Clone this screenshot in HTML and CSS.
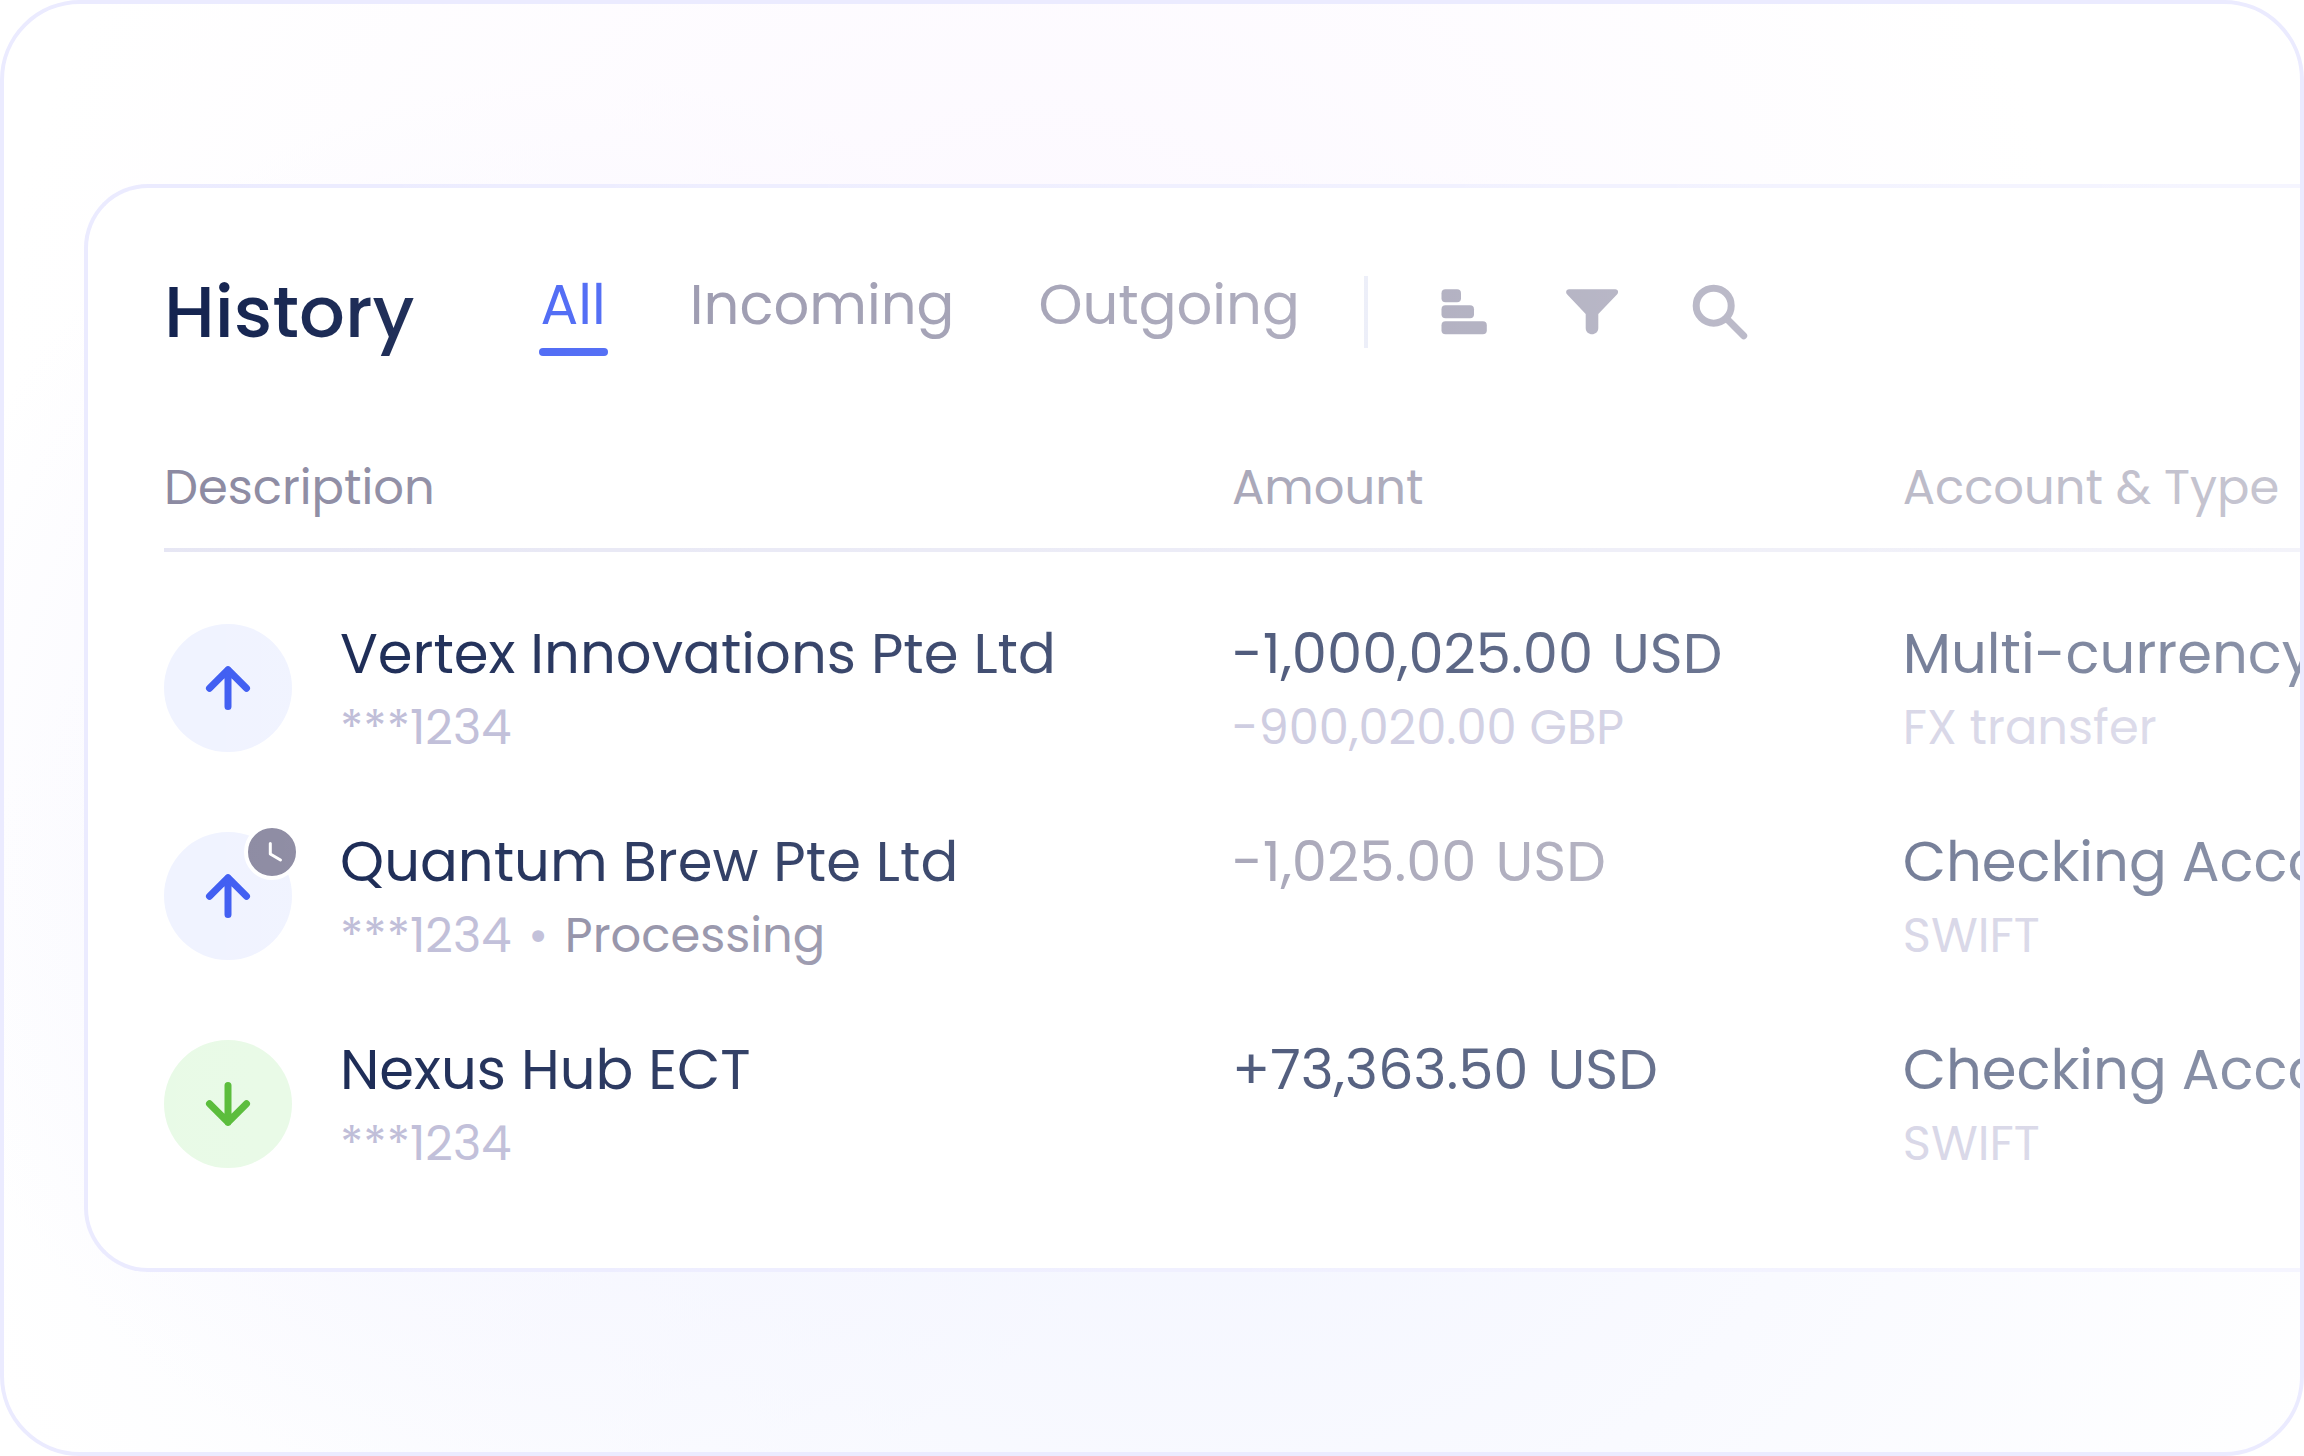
FILE: index.html
```html
<!DOCTYPE html>
<html lang="en">
<head>
    <meta charset="utf-8">
    <title>History</title>
    <link rel="stylesheet" href="styles.css">
</head>
<body>
    <main class="frame">
        <section class="card">
            <header class="card-header">
                <h1>History</h1>
                <nav class="tabs">
                    <button type="button" class="tab active">All</button>
                    <button type="button" class="tab">Incoming</button>
                    <button type="button" class="tab">Outgoing</button>
                </nav>
                <div class="tools">
                    <button type="button" class="tool" aria-label="Sort">
                        <svg viewBox="0 0 64 64"><rect x="9.5" y="9.3" width="19.5" height="13" rx="4"/><rect x="9.5" y="25.3" width="32.5" height="13" rx="4"/><rect x="9.5" y="41.3" width="45.3" height="13" rx="4"/></svg>
                    </button>
                    <button type="button" class="tool" aria-label="Filter">
                        <svg viewBox="0 0 64 64"><path d="M9 9.3H55.300C58 9.300 59 12.300 57.200 14.200L38.300 34V48C38.300 56.300 25.700 56.300 25.700 48V34L7 14.200C5.300 12.300 6.300 9.300 9 9.300Z"/></svg>
                    </button>
                    <button type="button" class="tool" aria-label="Search">
                        <svg viewBox="0 0 64 64"><g fill="none" stroke-width="7" stroke-linecap="round"><circle cx="25.700" cy="25.700" r="17.500"/><path d="M39 39L55.700 55.700"/></g></svg>
                    </button>
                </div>
            </header>

            <table>
                <thead>
                    <tr>
                        <th class="col-description">Description</th>
                        <th class="col-amount">Amount</th>
                        <th>Account &amp; Type</th>
                    </tr>
                </thead>
                <tbody>
                    <tr>
                        <td>
                            <div class="entry">
                                <span class="avatar outgoing">
                                    <svg viewBox="0 0 128 128"><path d="M64 82.500V45.700M45.500 64.200L64 45.700L82.500 64.200"/></svg>
                                </span>
                                <div>
                                    <div class="main">Vertex Innovations Pte Ltd</div>
                                    <div class="sub">***1234</div>
                                </div>
                            </div>
                        </td>
                        <td>
                            <div class="main">-1,000,025.00 <span class="currency">USD</span></div>
                            <div class="sub">-900,020.00 GBP</div>
                        </td>
                        <td>
                            <div class="main">Multi-currency</div>
                            <div class="sub">FX transfer</div>
                        </td>
                    </tr>
                    <tr>
                        <td>
                            <div class="entry">
                                <span class="avatar outgoing">
                                    <svg viewBox="0 0 128 128"><path d="M64 82.500V45.700M45.500 64.200L64 45.700L82.500 64.200"/></svg>
                                    <span class="badge">
                                        <svg viewBox="0 0 48 48"><path d="M22.300 15.500V26L32.500 32"/></svg>
                                    </span>
                                </span>
                                <div>
                                    <div class="main">Quantum Brew Pte Ltd</div>
                                    <div class="sub">***1234 <span class="dot">•</span> <span class="status">Processing</span></div>
                                </div>
                            </div>
                        </td>
                        <td>
                            <div class="main pending">-1,025.00 <span class="currency">USD</span></div>
                        </td>
                        <td>
                            <div class="main">Checking Account</div>
                            <div class="sub">SWIFT</div>
                        </td>
                    </tr>
                    <tr>
                        <td>
                            <div class="entry">
                                <span class="avatar incoming">
                                    <svg viewBox="0 0 128 128"><path d="M64 45.500V82.300M45.500 63.800L64 82.300L82.500 63.800"/></svg>
                                </span>
                                <div>
                                    <div class="main">Nexus Hub ECT</div>
                                    <div class="sub">***1234</div>
                                </div>
                            </div>
                        </td>
                        <td>
                            <div class="main">+73,363.50 <span class="currency">USD</span></div>
                        </td>
                        <td>
                            <div class="main">Checking Account</div>
                            <div class="sub">SWIFT</div>
                        </td>
                    </tr>
                </tbody>
            </table>
        </section>
    </main>
</body>
</html>
```
FILE: styles.css
```css
* {
    box-sizing: border-box;
}

body {
    margin: 0;
    background: #fff;
    color: #0f1f4c;
    font-family: Poppins, Inter, sans-serif;
}

.frame {
    min-height: 100vh;
    padding: 180px 0 180px 80px;
    border: 4px solid #ebebff;
    border-radius: 80px;
    overflow: hidden;
    background:
        radial-gradient(ellipse 45% 55% at 45% 22%, #fcf8ff, rgba(252, 248, 255, 0)),
        radial-gradient(ellipse 55% 65% at 52% 75%, #f3f5ff, rgba(243, 245, 255, 0)),
        radial-gradient(ellipse 30% 50% at 25% 55%, #f3f2ff, rgba(243, 242, 255, 0)),
        #fff;
}

/* the card runs off the right side and fades on the way */
.card {
    position: relative;
    padding: 76px 0 60px 76px;
    border: 4px solid #ebebff;
    border-right: 0;
    border-radius: 64px 0 0 64px;
    background: #fff;
}

.card::after {
    content: "";
    position: absolute;
    inset: -4px 0 -4px -4px;
    border-radius: 64px 0 0 64px;
    background: linear-gradient(to right, rgba(255, 255, 255, 0), rgba(255, 255, 255, 0.52));
    pointer-events: none;
}

.card-header {
    display: flex;
    align-items: center;
    height: 96px;
    margin-bottom: 92px;
}

h1 {
    margin: 0 124px 0 0;
    font-size: 72px;
    font-weight: 500;
    line-height: 96px;
}

button {
    padding: 0;
    border: 0;
    background: none;
    font-family: inherit;
    cursor: pointer;
}

.tabs {
    display: flex;
    gap: 80px;
}

.tab {
    position: relative;
    height: 96px;
    padding: 0 2px 14px;
    font-size: 56px;
    line-height: 82px;
    color: #8f8da5;
}

.tab.active {
    color: #3e5cf4;
}

.tab.active::after {
    content: "";
    position: absolute;
    left: 0;
    right: 0;
    bottom: 4px;
    height: 8px;
    border-radius: 4px;
    background: #3e5cf4;
}

.tools {
    display: flex;
    align-items: center;
    gap: 64px;
    height: 72px;
    margin-left: 62px;
    padding-left: 64px;
    border-left: 4px solid #e5e8f6;
}

.tool {
    width: 64px;
    height: 64px;
}

svg {
    display: block;
    width: 100%;
    height: 100%;
}

.tool svg {
    fill: #908ea6;
}

.tool g {
    stroke: #908ea6;
}

table {
    width: 100%;
    table-layout: fixed;
    border-collapse: separate;
    border-spacing: 0;
    white-space: nowrap;
}

th {
    padding: 0 0 24px;
    border-bottom: 4px solid #e6e6f4;
    text-align: left;
    font-size: 48px;
    font-weight: 400;
    line-height: 72px;
    color: #8a88a0;
}

.col-description {
    width: 50%;
}

.col-amount {
    width: 31.4%;
}

td {
    padding: 32px 0 28px;
    vertical-align: top;
}

tbody tr:first-child td {
    padding-top: 64px;
}

.entry {
    display: flex;
    align-items: flex-start;
    gap: 48px;
}

.main {
    font-size: 56px;
    line-height: 76px;
}

.main.pending {
    color: #8a88a0;
}

.currency,
.dot {
    margin-left: 4px;
}

.sub {
    font-size: 48px;
    line-height: 72px;
    color: #bcbad6;
}

.status {
    margin-left: 4px;
    color: #8a88a0;
}

.avatar {
    position: relative;
    flex: none;
    width: 128px;
    height: 128px;
    margin-top: 8px;
    border-radius: 50%;
    fill: none;
    stroke-width: 7;
    stroke-linecap: round;
    stroke-linejoin: round;
}

.outgoing {
    background: #f0f3ff;
    stroke: #3c5af2;
}

.incoming {
    background: #e8fae6;
    stroke: #56bb36;
}

.badge {
    position: absolute;
    top: -8px;
    right: -8px;
    width: 56px;
    height: 56px;
    border: 4px solid #fff;
    border-radius: 50%;
    background: #8a88a0;
    stroke: #fff;
    stroke-width: 3;
}
```
